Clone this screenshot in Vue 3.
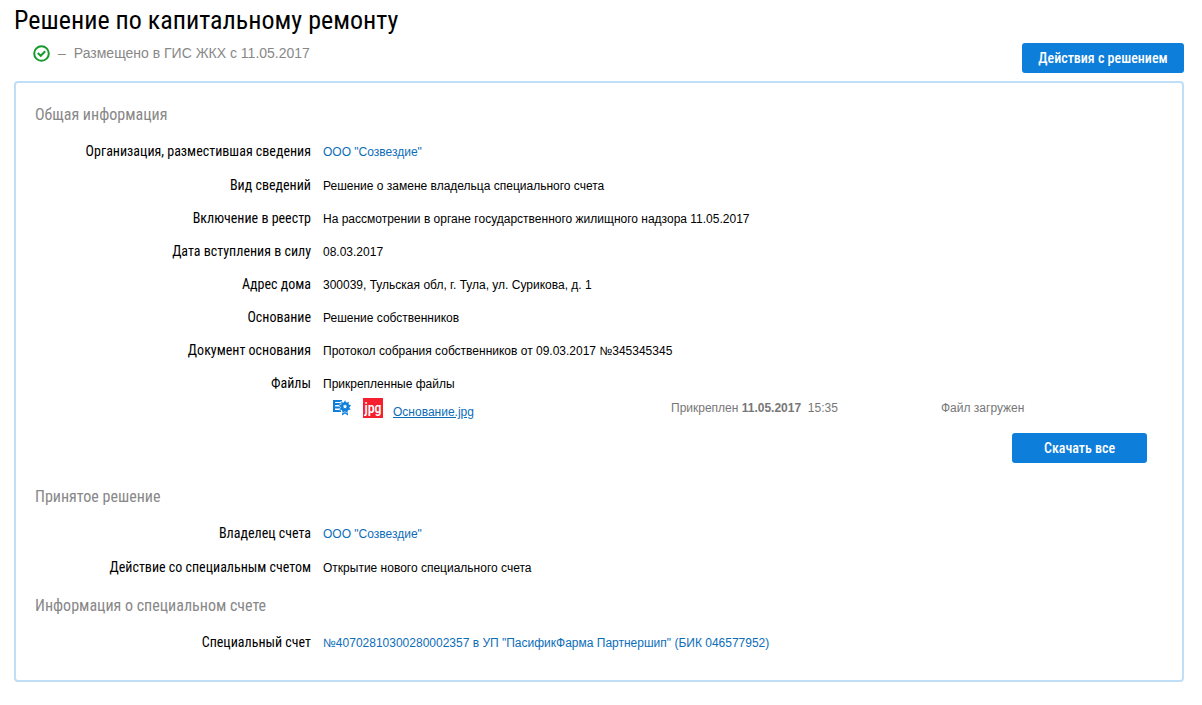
<script setup>
const general = [
  { label: 'Организация, разместившая сведения', value: 'ООО "Созвездие"', link: true },
  { label: 'Вид сведений', value: 'Решение о замене владельца специального счета' },
  { label: 'Включение в реестр', value: 'На рассмотрении в органе государственного жилищного надзора 11.05.2017' },
  { label: 'Дата вступления в силу', value: '08.03.2017' },
  { label: 'Адрес дома', value: '300039, Тульская обл, г. Тула, ул. Сурикова, д. 1' },
  { label: 'Основание', value: 'Решение собственников' },
  { label: 'Документ основания', value: 'Протокол собрания собственников от 09.03.2017 №345345345' },
  { label: 'Файлы', value: 'Прикрепленные файлы' },
]
const decision = [
  { label: 'Владелец счета', value: 'ООО "Созвездие"', link: true },
  { label: 'Действие со специальным счетом', value: 'Открытие нового специального счета' },
]
const account = [
  { label: 'Специальный счет', value: '№40702810300280002357 в УП "ПасификФарма Партнершип" (БИК 046577952)', link: true },
]
</script>

<template>
  <main class="page">
    <header class="head">
      <div>
        <h1>Решение по капитальному ремонту</h1>
        <p class="status">
          <svg class="check" viewBox="0 0 17 17" aria-hidden="true">
            <circle cx="8.5" cy="8.5" r="7.3" />
            <path d="M4.800 8 7.700 10.800 12.200 6.200" />
          </svg>
          <span>–</span>
          <span>Размещено в ГИС ЖКХ с 11.05.2017</span>
        </p>
      </div>
      <button type="button" class="btn actions">Действия с решением</button>
    </header>

    <div class="panel">
      <section>
        <h2>Общая информация</h2>
        <dl>
          <div v-for="row in general" :key="row.label" class="row">
            <dt>{{ row.label }}</dt>
            <dd>
              <a v-if="row.link" href="#">{{ row.value }}</a>
              <template v-else>{{ row.value }}</template>
            </dd>
          </div>
        </dl>
        <div class="file">
          <svg class="sign" viewBox="0 0 18 16" aria-hidden="true">
            <path class="frame" d="M9 1H1v10h7M1 4h7M1 7.500h6" />
            <path class="tails" d="M9 9v6.500l3-2 3 2V9z" />
            <path class="seal" d="M12 0l1.500 2.300 2.700-.8-.3 2.800 2.600 1-1.900 2.100 1.400 2.500-2.800.4-.5 2.700L12 11.700 9.300 13l-.5-2.700-2.800-.4 1.400-2.500-1.900-2.100 2.600-1-.3-2.800 2.700.8z" />
            <path class="hole" d="M12 4.200l.7 1.400 1.500.2-1.100 1.100.3 1.500-1.400-.7-1.400.7.3-1.500-1.100-1.100 1.500-.2z" />
          </svg>
          <span class="type">jpg</span>
          <a class="name" href="#">Основание.jpg</a>
          <span class="date">Прикреплен <b>11.05.2017</b>&nbsp; 15:35</span>
          <span class="state">Файл загружен</span>
        </div>
        <div class="all">
          <button type="button" class="btn download">Скачать все</button>
        </div>
      </section>

      <section>
        <h2>Принятое решение</h2>
        <dl>
          <div v-for="row in decision" :key="row.label" class="row">
            <dt>{{ row.label }}</dt>
            <dd>
              <a v-if="row.link" href="#">{{ row.value }}</a>
              <template v-else>{{ row.value }}</template>
            </dd>
          </div>
        </dl>
      </section>

      <section>
        <h2>Информация о специальном счете</h2>
        <dl>
          <div v-for="row in account" :key="row.label" class="row">
            <dt>{{ row.label }}</dt>
            <dd><a href="#">{{ row.value }}</a></dd>
          </div>
        </dl>
      </section>
    </div>
  </main>
</template>

<style>
body { background: #fff; }
</style>

<style scoped>
.page {
  padding: 3px 18px 22px 14px;
  font: 12px/17px "Liberation Sans", Arial, sans-serif;
  color: #000;
}
h1, h2, dt, .btn, .type { font-family: "Roboto Condensed", "Liberation Sans Narrow", Roboto, sans-serif; }
h1, h2, p, dl, dd { margin: 0; }
.head {
  display: flex;
  justify-content: space-between;
  align-items: flex-end;
  margin-bottom: 8px;
}
h1 { font-size: 26px; line-height: 34px; font-weight: 400; }
.status {
  display: flex;
  align-items: center;
  gap: 8px;
  padding: 6px 0 10px 19px;
  font-size: 14px;
  line-height: 20px;
  color: #888;
}
.check { width: 17px; height: 17px; fill: none; stroke: #159a2c; stroke-width: 2; }
.btn {
  height: 30px;
  padding: 0;
  border: 0;
  border-radius: 3px;
  background: #0d7ed9;
  color: #fff;
  font-size: 14px;
  font-weight: 500;
}
.actions { width: 162px; }
.panel {
  border: 2px solid #c0def6;
  border-radius: 4px;
  padding: 21px 35px 28px 19px;
}
h2 {
  font-size: 16px;
  line-height: 22px;
  font-weight: 400;
  color: #888;
  margin-bottom: 17px;
}
dl { display: grid; gap: 16px; }
.row { display: grid; grid-template-columns: 276px 1fr; gap: 12px; line-height: 17px; }
dt { text-align: right; font-size: 14px; }
dd { padding-top: 1px; margin-bottom: -1px; }
.row:first-child { margin-bottom: 1px; }
a { color: #0c6db8; text-decoration: none; }
section + section h2 { margin-top: 23px; }
section + section + section h2 { margin-top: 19px; }
.file {
  display: grid;
  grid-template-columns: 20px 20px 268px 260px 1fr;
  column-gap: 10px;
  align-items: center;
  padding: 6px 0 15px 298px;
  line-height: 20px;
  color: #777;
}
.sign { width: 18px; height: 16px; }
.frame { fill: none; stroke: #0d7ed9; stroke-width: 2; }
.tails, .seal { fill: #0d7ed9; }
.seal { stroke: #fff; stroke-width: 0.6; }
.hole { fill: #fff; }
.type { background: #f51f30; color: #fff; text-align: center; font-size: 14px; font-weight: 500; }
.name { text-decoration: underline; padding-top: 8px; line-height: 12px; }
.all { display: flex; justify-content: flex-end; }
.download { width: 135px; }
</style>
